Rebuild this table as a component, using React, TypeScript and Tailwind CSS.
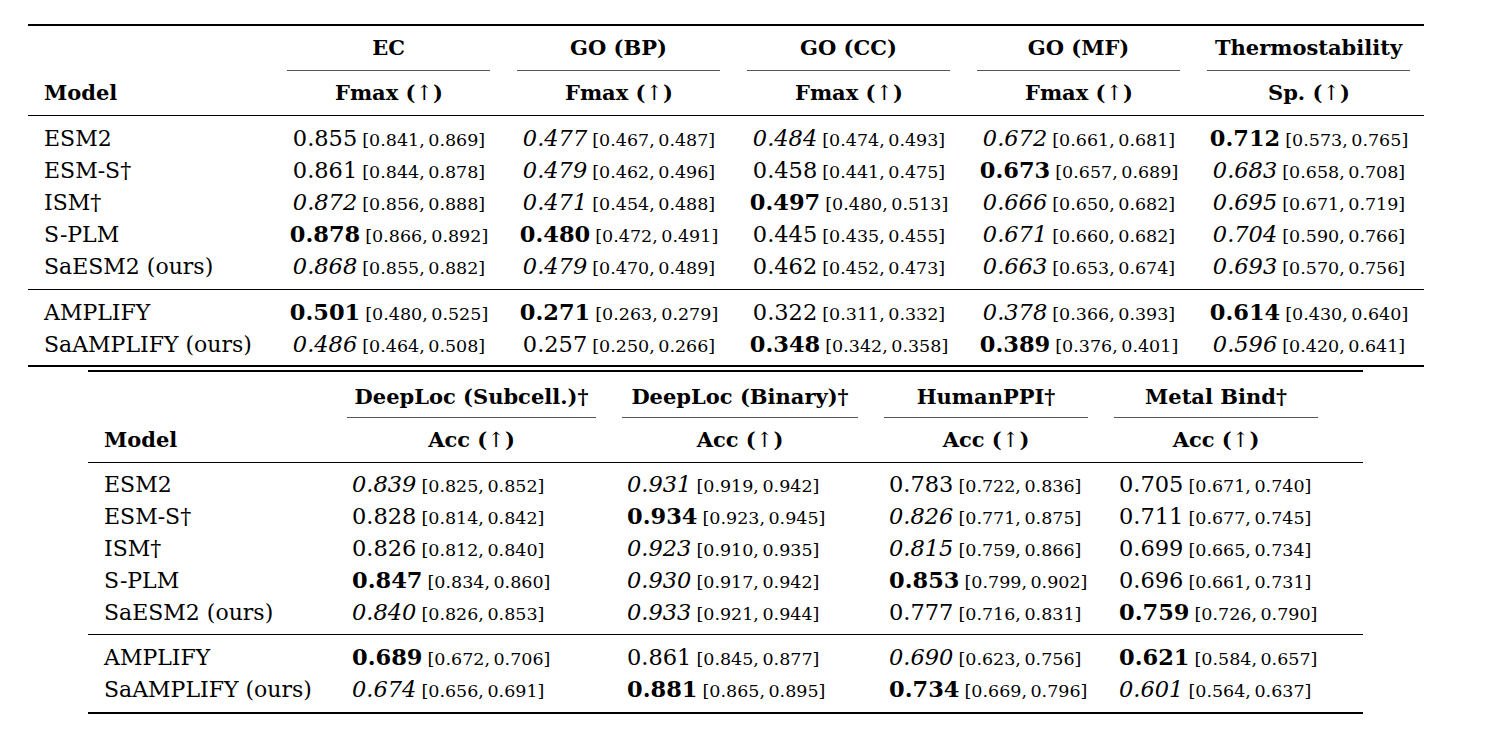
import React from "react";

type S = "n" | "i" | "b";
type V = [string, S, string, string];
type Row = { name: string; vals: V[] };

const t1Groups: Row[][] = [
  [
    { name: "ESM2", vals: [["0.855", "n", "0.841", "0.869"], ["0.477", "i", "0.467", "0.487"], ["0.484", "i", "0.474", "0.493"], ["0.672", "i", "0.661", "0.681"], ["0.712", "b", "0.573", "0.765"]] },
    { name: "ESM-S†", vals: [["0.861", "n", "0.844", "0.878"], ["0.479", "i", "0.462", "0.496"], ["0.458", "n", "0.441", "0.475"], ["0.673", "b", "0.657", "0.689"], ["0.683", "i", "0.658", "0.708"]] },
    { name: "ISM†", vals: [["0.872", "i", "0.856", "0.888"], ["0.471", "i", "0.454", "0.488"], ["0.497", "b", "0.480", "0.513"], ["0.666", "i", "0.650", "0.682"], ["0.695", "i", "0.671", "0.719"]] },
    { name: "S-PLM", vals: [["0.878", "b", "0.866", "0.892"], ["0.480", "b", "0.472", "0.491"], ["0.445", "n", "0.435", "0.455"], ["0.671", "i", "0.660", "0.682"], ["0.704", "i", "0.590", "0.766"]] },
    { name: "SaESM2 (ours)", vals: [["0.868", "i", "0.855", "0.882"], ["0.479", "i", "0.470", "0.489"], ["0.462", "n", "0.452", "0.473"], ["0.663", "i", "0.653", "0.674"], ["0.693", "i", "0.570", "0.756"]] },
  ],
  [
    { name: "AMPLIFY", vals: [["0.501", "b", "0.480", "0.525"], ["0.271", "b", "0.263", "0.279"], ["0.322", "n", "0.311", "0.332"], ["0.378", "i", "0.366", "0.393"], ["0.614", "b", "0.430", "0.640"]] },
    { name: "SaAMPLIFY (ours)", vals: [["0.486", "i", "0.464", "0.508"], ["0.257", "n", "0.250", "0.266"], ["0.348", "b", "0.342", "0.358"], ["0.389", "b", "0.376", "0.401"], ["0.596", "i", "0.420", "0.641"]] },
  ],
];

const t2Groups: Row[][] = [
  [
    { name: "ESM2", vals: [["0.839", "i", "0.825", "0.852"], ["0.931", "i", "0.919", "0.942"], ["0.783", "n", "0.722", "0.836"], ["0.705", "n", "0.671", "0.740"]] },
    { name: "ESM-S†", vals: [["0.828", "n", "0.814", "0.842"], ["0.934", "b", "0.923", "0.945"], ["0.826", "i", "0.771", "0.875"], ["0.711", "n", "0.677", "0.745"]] },
    { name: "ISM†", vals: [["0.826", "n", "0.812", "0.840"], ["0.923", "i", "0.910", "0.935"], ["0.815", "i", "0.759", "0.866"], ["0.699", "n", "0.665", "0.734"]] },
    { name: "S-PLM", vals: [["0.847", "b", "0.834", "0.860"], ["0.930", "i", "0.917", "0.942"], ["0.853", "b", "0.799", "0.902"], ["0.696", "n", "0.661", "0.731"]] },
    { name: "SaESM2 (ours)", vals: [["0.840", "i", "0.826", "0.853"], ["0.933", "i", "0.921", "0.944"], ["0.777", "n", "0.716", "0.831"], ["0.759", "b", "0.726", "0.790"]] },
  ],
  [
    { name: "AMPLIFY", vals: [["0.689", "b", "0.672", "0.706"], ["0.861", "n", "0.845", "0.877"], ["0.690", "i", "0.623", "0.756"], ["0.621", "b", "0.584", "0.657"]] },
    { name: "SaAMPLIFY (ours)", vals: [["0.674", "i", "0.656", "0.691"], ["0.881", "b", "0.865", "0.895"], ["0.734", "b", "0.669", "0.796"], ["0.601", "i", "0.564", "0.637"]] },
  ],
];

function Val({ v }: { v: V }) {
  const [num, s, lo, hi] = v;
  const cls = s === "i" ? "italic" : s === "b" ? "font-bold" : "font-normal";
  return (
    <span className="flex items-baseline whitespace-nowrap">
      <span className={`${cls} text-[22.5px]`}>{num}</span>
      <span className="ml-[5px] text-[17.5px] font-normal">
        [{lo},{"\u2009"}{hi}]
      </span>
    </span>
  );
}

function Sub({ label }: { label: string }) {
  return (
    <span className="font-bold text-[21px] whitespace-nowrap">
      {label} (<span className="font-normal">↑</span>)
    </span>
  );
}

function Table1() {
  const groups = ["EC", "GO (BP)", "GO (CC)", "GO (MF)", "Thermostability"];
  const subs = ["Fmax", "Fmax", "Fmax", "Fmax", "Sp."];
  const grid = "grid grid-cols-[246px_230px_230px_230px_230px_230px]";
  return (
    <div className="ml-[28px] mt-[24px] w-[1396px] border-t-2 border-black">
      <div className={grid}>
        <div />
        {groups.map((g) => (
          <div key={g} className="pl-[13px] pr-[14px]">
            <div className="h-[45px] border-b border-[#555] flex items-center justify-center font-bold text-[21px] whitespace-nowrap">
              {g}
            </div>
          </div>
        ))}
      </div>
      <div className={`${grid} h-[45px] border-b border-black`}>
        <div className="pl-[16px] flex items-center font-bold text-[21px]">Model</div>
        {subs.map((s, i) => (
          <div key={i} className="flex items-center justify-center">
            <Sub label={s} />
          </div>
        ))}
      </div>
      {t1Groups.map((rows, gi) => (
        <div
          key={gi}
          className={`pt-[6px] ${gi === 0 ? "pb-[7px] border-b border-black" : "pb-[5px] border-b-2 border-black"}`}
        >
          {rows.map((r) => (
            <div key={r.name} className={`${grid} h-[32px]`}>
              <div className="pl-[16px] flex items-center text-[22px] whitespace-nowrap">{r.name}</div>
              {r.vals.map((v, i) => (
                <div key={i} className="flex items-center justify-center">
                  <Val v={v} />
                </div>
              ))}
            </div>
          ))}
        </div>
      ))}
    </div>
  );
}

function Table2() {
  const groups = ["DeepLoc (Subcell.)†", "DeepLoc (Binary)†", "HumanPPI†", "Metal Bind†"];
  const grid = "grid grid-cols-[246px_275px_262px_230px_230px_32px]";
  return (
    <div className="ml-[88px] mt-[3px] w-[1275px] border-t-2 border-black">
      <div className={grid}>
        <div />
        {groups.map((g) => (
          <div key={g} className="px-[13px]">
            <div className="h-[46px] pt-[5px] border-b border-[#555] flex items-center justify-center font-bold text-[21px] whitespace-nowrap">
              {g}
            </div>
          </div>
        ))}
        <div />
      </div>
      <div className={`${grid} h-[45px] border-b border-black`}>
        <div className="pl-[16px] flex items-center font-bold text-[21px]">Model</div>
        {groups.map((g) => (
          <div key={g} className="flex items-center justify-center">
            <Sub label="Acc" />
          </div>
        ))}
        <div />
      </div>
      {t2Groups.map((rows, gi) => (
        <div
          key={gi}
          className={`${gi === 0 ? "pt-[5px] pb-[6px] border-b border-black" : "pt-[6px] pb-[7px] border-b-2 border-black"}`}
        >
          {rows.map((r) => (
            <div key={r.name} className={`${grid} h-[32px]`}>
              <div className="pl-[16px] flex items-center text-[22px] whitespace-nowrap">{r.name}</div>
              {r.vals.map((v, i) => (
                <div key={i} className="flex items-center pl-[18px]">
                  <Val v={v} />
                </div>
              ))}
              <div />
            </div>
          ))}
        </div>
      ))}
    </div>
  );
}

export default function App() {
  return (
    <div className="w-[1492px] h-[734px] bg-white text-black overflow-hidden font-['DejaVu_Serif',serif]">
      <Table1 />
      <Table2 />
    </div>
  );
}
